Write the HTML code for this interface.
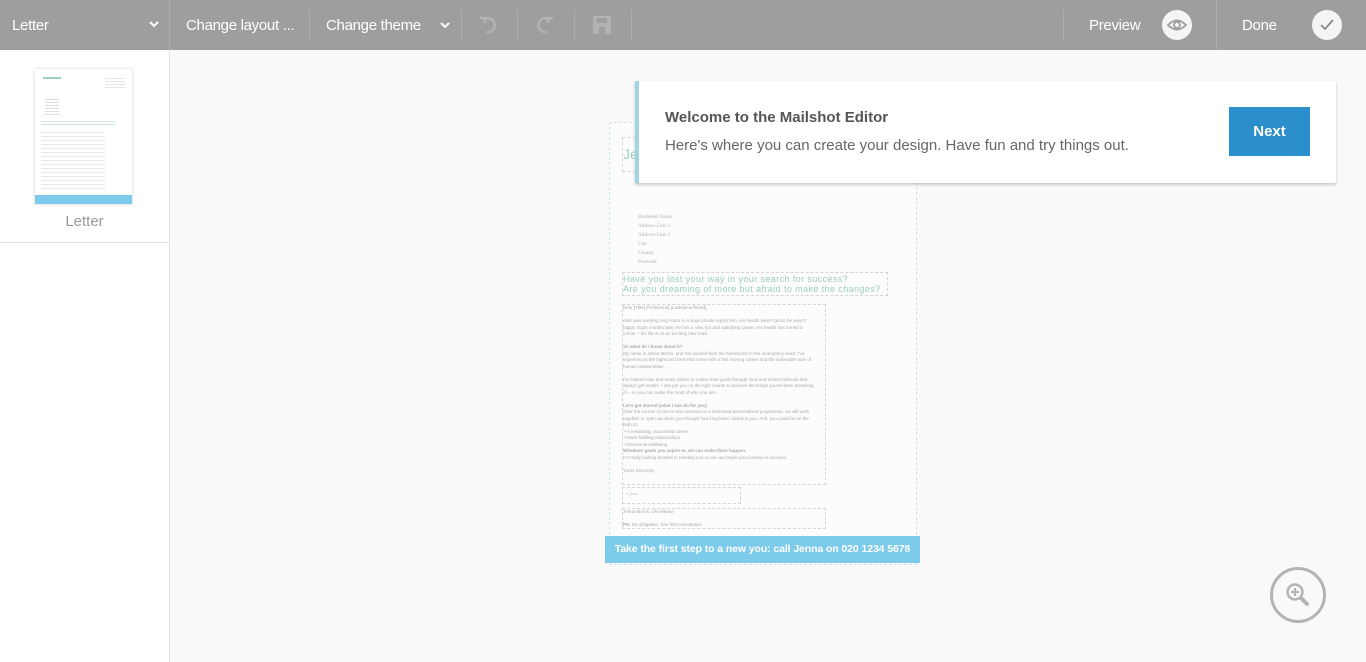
<!DOCTYPE html>
<html><head><style>
*{margin:0;padding:0;box-sizing:border-box}
body{width:1366px;height:662px;overflow:hidden;background:#f9f9f9;font-family:"Liberation Sans",sans-serif;position:relative}
.tb{position:absolute;left:0;top:0;width:1366px;height:50px;background:#9e9e9f;color:#fff;font-size:15px}
.tb span{position:absolute;top:17px;letter-spacing:-0.3px}
.sep{position:absolute;top:10px;width:1px;height:30px;background:#adadae}
.side{position:absolute;left:0;top:50px;width:170px;height:612px;background:#fff;border-right:1px solid #e0e0e0}
.t{position:absolute;color:#999;font-size:5px;line-height:7px;white-space:nowrap}
.db{position:absolute;border:1px dashed #d5d5d5}
</style></head><body>
<div class="tb">
<span style="left:12px">Letter</span>
<svg style="position:absolute;left:149px;top:21px" width="10" height="7" viewBox="0 0 10 7"><path d="M1 1 L5 5 L9 1" fill="none" stroke="#fff" stroke-width="2"/></svg>
<div class="sep" style="left:169px;top:0;height:50px"></div>
<span style="left:186px">Change layout ...</span>
<div class="sep" style="left:309px"></div>
<span style="left:326px">Change theme</span>
<svg style="position:absolute;left:440px;top:22px" width="10" height="7" viewBox="0 0 10 7"><path d="M1 1 L5 5 L9 1" fill="none" stroke="#fff" stroke-width="2"/></svg>
<div class="sep" style="left:461px"></div>
<svg style="position:absolute;left:478px;top:15px" width="20" height="20" viewBox="0 0 20 20"><path d="M5 5 A7 7 0 1 1 8 17" fill="none" stroke="#b2b2b3" stroke-width="2.5"/><path d="M2 3 L7 3 L7 8" fill="none" stroke="#b2b2b3" stroke-width="2.5"/></svg>
<div class="sep" style="left:517px"></div>
<svg style="position:absolute;left:535px;top:15px" width="20" height="20" viewBox="0 0 20 20"><path d="M15 5 A7 7 0 1 0 12 17" fill="none" stroke="#b2b2b3" stroke-width="2.5"/><path d="M18 3 L13 3 L13 8" fill="none" stroke="#b2b2b3" stroke-width="2.5"/></svg>
<div class="sep" style="left:574px"></div>
<svg style="position:absolute;left:592px;top:15px" width="20" height="20" viewBox="0 0 20 20"><rect x="1" y="1" width="18" height="18" rx="1" fill="#b2b2b3"/><rect x="5" y="3" width="10" height="5" fill="#9e9e9f"/><rect x="7" y="12" width="6" height="7" fill="#9e9e9f"/></svg>
<div class="sep" style="left:631px"></div>
<div class="sep" style="left:1063px"></div>
<span style="left:1089px">Preview</span>
<div style="position:absolute;left:1162px;top:10px;width:30px;height:30px;border-radius:50%;background:#f5f5f5"></div>
<svg style="position:absolute;left:1166px;top:16px" width="22" height="18" viewBox="0 0 22 18"><path d="M2 9 Q11 0 20 9 Q11 18 2 9Z" fill="none" stroke="#9e9e9f" stroke-width="1.8"/><circle cx="11" cy="9" r="3" fill="none" stroke="#9e9e9f" stroke-width="1.8"/></svg>
<div class="sep" style="left:1216px;top:0;height:50px"></div>
<span style="left:1242px">Done</span>
<div style="position:absolute;left:1312px;top:10px;width:30px;height:30px;border-radius:50%;background:#f5f5f5"></div>
<svg style="position:absolute;left:1318px;top:16px" width="18" height="18" viewBox="0 0 18 18"><path d="M3 9 L7 13 L15 4" fill="none" stroke="#8a8a8a" stroke-width="1.8"/></svg>
</div>
<div class="side">
<div style="position:absolute;left:35px;top:19px;width:97px;height:135px;background:#fff;box-shadow:0 0 3px #ccc">
<div style="position:absolute;left:8px;top:8px;width:18px;height:2px;background:#9dd0b8"></div>
<div style="position:absolute;left:70px;top:7px;width:20px;height:12px;background:repeating-linear-gradient(#fff 0 2px,#e6e6e6 2px 3px)"></div>
<div style="position:absolute;left:10px;top:28px;width:14px;height:18px;background:repeating-linear-gradient(#fff 0 2px,#ddd 2px 3px)"></div>
<div style="position:absolute;left:6px;top:50px;width:75px;height:6px;background:repeating-linear-gradient(#fff 0 2px,#cfe7dc 2px 3px)"></div>
<div style="position:absolute;left:6px;top:60px;width:64px;height:62px;background:repeating-linear-gradient(#fff 0 3px,#e8e8e8 3px 4px)"></div>
<div style="position:absolute;left:0;bottom:0;width:97px;height:9px;background:#7ccbeb"></div>
</div>
<div style="position:absolute;left:0;top:163px;width:169px;text-align:center;color:#999;font-size:15px">Letter</div>
<div style="position:absolute;left:0;top:192px;width:169px;height:1px;background:#ddd"></div>
</div>

<div style="position:absolute;left:609px;top:122px;width:308px;height:443px;border:1px dashed #cfe4ea;background:#fcfcfc"></div>
<div class="db" style="left:622px;top:137px;width:30px;height:35px"></div>
<div class="t" style="left:623px;top:146px;font-size:14px;line-height:16px;color:#9dd0b8">Je</div>
<div class="t" style="left:638px;top:213px;line-height:9px;font-family:'Liberation Serif',serif;font-weight:bold;color:#c8c8c8">Recipient Name<br>Address Line 1<br>Address Line 2<br>City<br>County<br>Postcode</div>
<div class="db" style="left:622px;top:272px;width:266px;height:24px"></div>
<div class="t" style="left:623px;top:274px;font-size:9px;line-height:10px;color:#9dd0b8;letter-spacing:.4px">Have you lost your way in your search for success?<br>Are you dreaming of more but afraid to make the changes?</div>
<div class="db" style="left:622px;top:304px;width:204px;height:181px"></div>
<div class="t" style="left:623px;top:305px;font-size:4.5px;line-height:6.5px;color:#aaa">Dear [Title] [FirstName] [LastName/friend],<br><br>Alan was working long hours in a large private equity firm. His health wasn't good, he wasn't<br>happy. Eight months later, he has a new, fun and satisfying career. His health has turned a<br>corner – his life is on an exciting new road.<br><br><b>So what do I know about it?</b><br>My name is Jenna Morris, and I've worked from the boardroom to the emergency ward; I've<br>experienced the highs and lows that come with a fast moving career and the vulnerable side of<br>human relationships.<br><br>I've helped Alan and many others to realise their goals through tried and tested methods that<br>always get results. I can put you on the right course to achieve the things you've been dreaming<br>of – so you can make the most of who you are.<br><br><b>Let's get started (what I can do for you)</b><br>Over the course of one-to-one sessions or a dedicated personalised programme, we will work<br>together to open up doors you thought had long been closed to you. And, you could be on the<br>path to:<br>&nbsp;• A rewarding, successful career<br>&nbsp;• More fulfilling relationships<br>&nbsp;• Emotional wellbeing<br><b>Whatever goals you aspire to, we can make them happen.</b><br>I'm really looking forward to meeting you so we can begin your journey to success.<br><br>Yours Sincerely,</div>
<div class="db" style="left:622px;top:487px;width:119px;height:17px"></div>
<div class="t" style="left:626px;top:492px;font-style:italic">~ /~~</div>
<div class="db" style="left:622px;top:508px;width:204px;height:21px"></div>
<div class="t" style="left:623px;top:509px;font-size:4.5px;line-height:6.5px;color:#aaa">Jenna Morris, Life Mentor<br><br><b>PS:</b> No obligation, free first consultation</div>
<div style="position:absolute;left:605px;top:536px;width:315px;height:27px;background:#7ccbeb;color:#fff;font-size:10.5px;font-weight:bold;line-height:27px;text-align:center;white-space:nowrap;letter-spacing:-0.1px">Take the first step to a new you: call Jenna on 020 1234 5678</div>

<div style="position:absolute;left:635px;top:81px;width:701px;height:102px;background:#fff;border-left:4px solid #a3d4e6;box-shadow:0 2px 3px rgba(0,0,0,.2)">
<div style="position:absolute;left:26px;top:28px;color:#555;font-weight:bold;font-size:15px">Welcome to the Mailshot Editor</div>
<div style="position:absolute;left:26px;top:56px;font-size:15px;color:#666">Here's where you can create your design. Have fun and try things out.</div>
<div style="position:absolute;left:590px;top:26px;width:81px;height:49px;background:#2a8fcc;color:#fff;font-size:15px;font-weight:bold;text-align:center;line-height:49px">Next</div>
</div>

<div style="position:absolute;left:1270px;top:567px;width:56px;height:56px;border:3px solid #b3b3b3;border-radius:50%"></div>
<svg style="position:absolute;left:1280px;top:577px" width="36" height="36" viewBox="0 0 36 36"><circle cx="15" cy="15" r="7.5" fill="none" stroke="#b3b3b3" stroke-width="2.5"/><path d="M15 11v8M11 15h8" stroke="#b3b3b3" stroke-width="2.2"/><path d="M21 21l6 6" stroke="#b3b3b3" stroke-width="4" stroke-linecap="round"/></svg>
</body></html>
